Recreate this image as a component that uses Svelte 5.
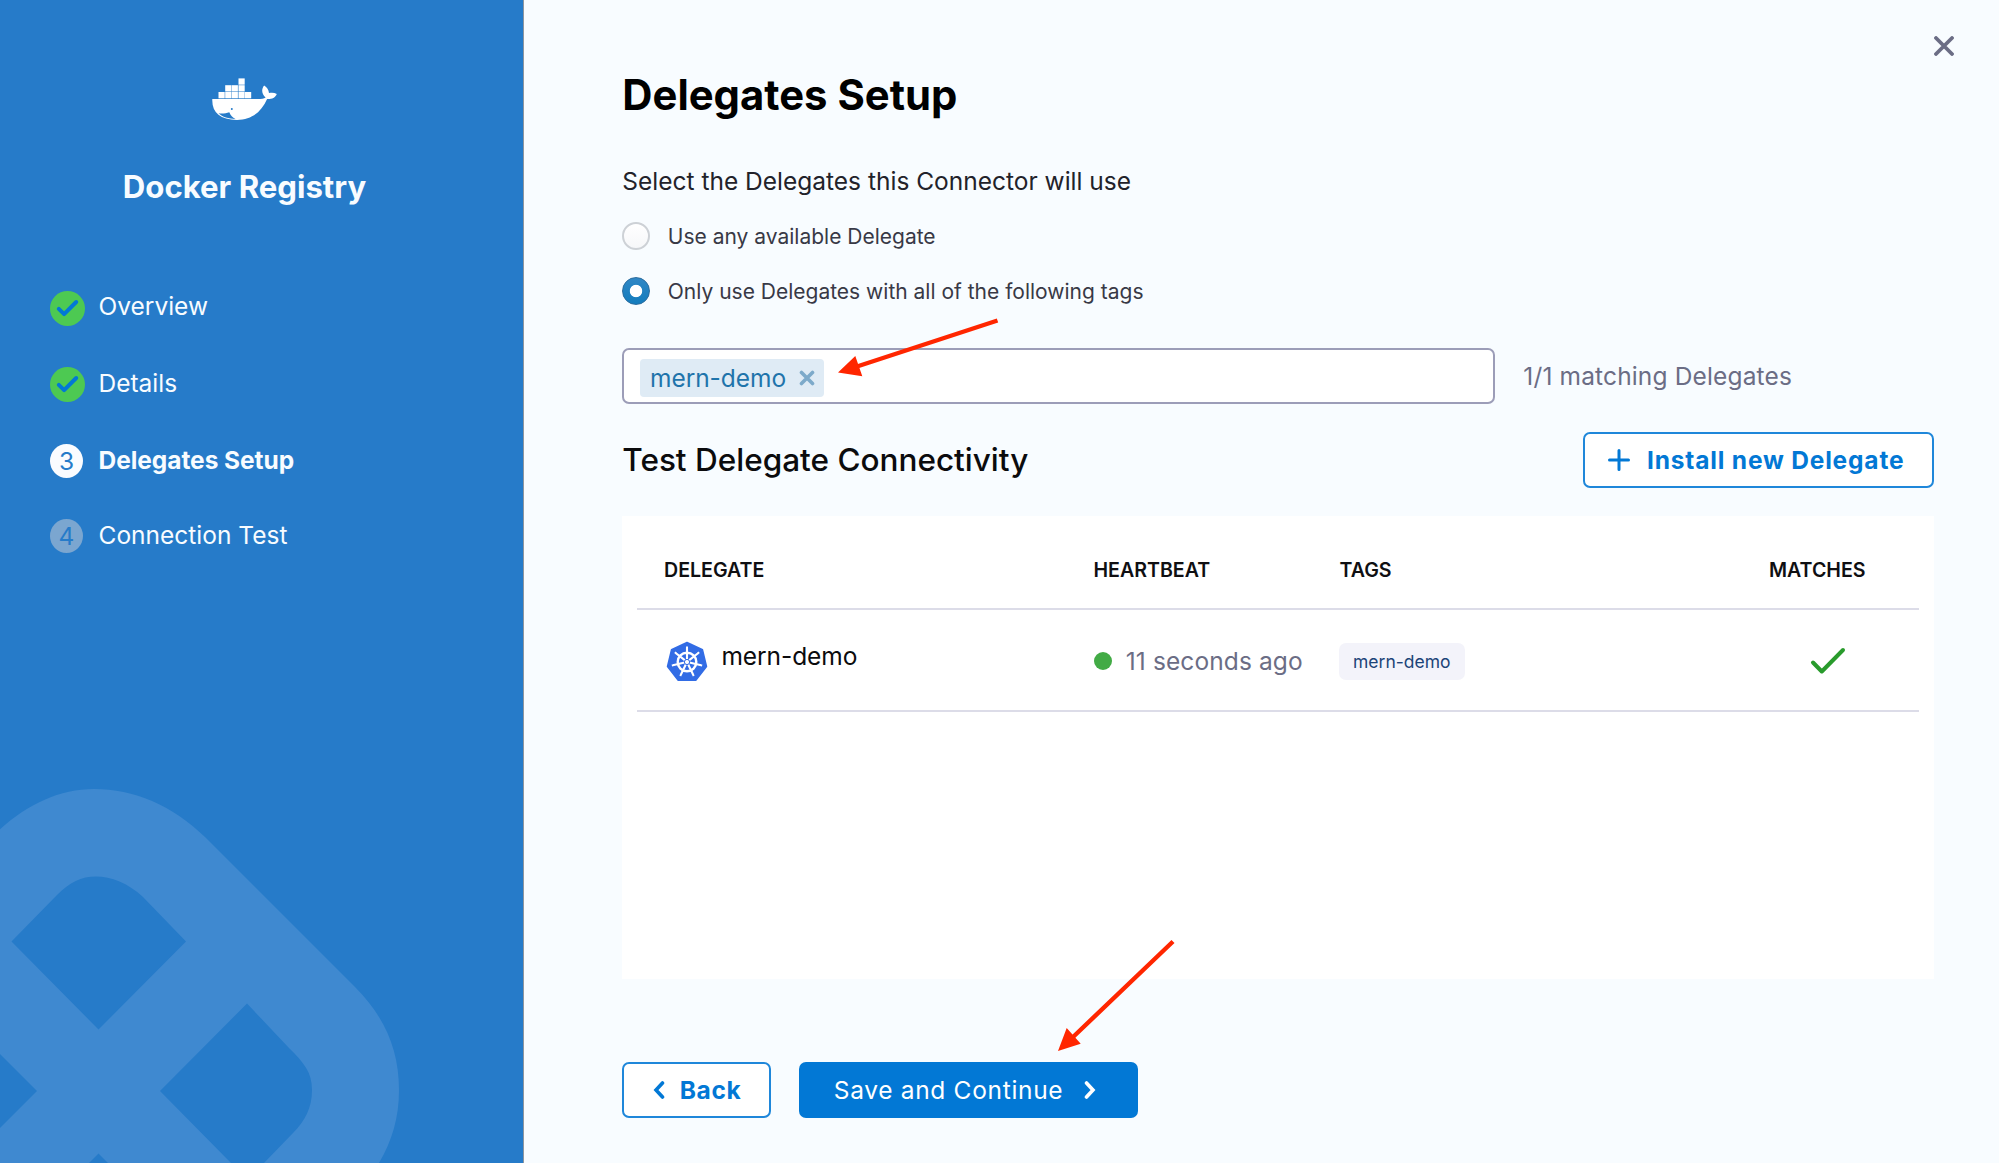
<script>
  const steps = [
    { n: 1, label: 'Overview', state: 'done' },
    { n: 2, label: 'Details', state: 'done' },
    { n: 3, label: 'Delegates Setup', state: 'current' },
    { n: 4, label: 'Connection Test', state: 'pending' }
  ];
  const columns = ['Delegate', 'Heartbeat', 'Tags', 'Matches'];
  const delegates = [{ name: 'mern-demo', heartbeat: '11 seconds ago', tags: ['mern-demo'] }];

  // Container boxes stacked on the whale's back: [x, y]
  const boxes = [[6.5, 14], [13.2, 14], [19.7, 14], [26.5, 14], [33, 14], [13.2, 7.2], [19.7, 7.2], [26.5, 7.2], [26.5, 0.4]];
  const spokes = Array.from({ length: 7 }, (_, i) => (i * 360) / 7);
</script>

<div class="wizard">
  <aside class="sidebar">
    <svg class="pattern" viewBox="0 0 400 375" width="400" height="375" aria-hidden="true">
      <path
        fill-rule="evenodd"
        d="M0 41.300C28 16 60 1 94 1C134 1 172 17 205 49L355 199C385 229 399 262 399 302C399 330 392 353 379 375H264L293 345C305 333 312 320 312 302C312 284 304 275 289 260L247 215.500L160 303L231 375H108L98.500 365.500L89 375H0V340L37 303L0 266ZM11.500 153.500L98.500 241.500L186 153.500L143 109C128 95 111 88.500 96 88.500C81 88.500 70 94 57 107Z"
      />
    </svg>

    <svg class="docker" viewBox="0 0 65 43" width="65" height="43" aria-label="Docker">
      {#each boxes as [x, y]}
        <rect {x} {y} width="6.200" height="6.300" />
      {/each}
      <path d="M0.300 21H46c3.800 0 5.800-.6 7.600-1.600-3.800-3.500-4.600-7.800-1.500-12 3 2 4.600 4.200 4.900 7.600 3-.7 5.500-.4 7.800.9-1.500 3.800-5 5.300-9.700 5.100C49.500 33.500 40 42 25 42 8 42-.3 34.500.3 21Z" />
      <path class="cut" d="M6.500 35.300C10 35.800 14 35.500 17.300 34.300 18.600 37.600 20.500 39.700 23.500 41 16.500 40.800 10.500 39 6.500 35.300Z" />
      <circle class="cut" cx="19.800" cy="31" r="1" />
    </svg>
    <h2>Docker Registry</h2>

    <ol class="steps">
      {#each steps as step}
        <li class={step.state}>
          {#if step.state === 'done'}
            <svg class="mark" viewBox="0 0 35 35" width="35" height="35">
              <circle cx="17.500" cy="17.500" r="17.500" />
              <path d="M8.800 17.900l5.300 5.200L26.200 11" />
            </svg>
          {:else}
            <span class="mark number">{step.n}</span>
          {/if}
          <span class="label">{step.label}</span>
        </li>
      {/each}
    </ol>
  </aside>

  <main>
    <button class="close" aria-label="Close">
      <svg viewBox="0 0 20 20" width="20" height="20"><path d="M2 2l16 16M18 2l-16 16" /></svg>
    </button>

    <h1>Delegates Setup</h1>
    <p class="lead">Select the Delegates this Connector will use</p>

    <div class="radios">
      <label><span class="radio"></span><span class="text">Use any available Delegate</span></label>
      <label><span class="radio on"></span><span class="text">Only use Delegates with all of the following tags</span></label>
    </div>

    <div class="tag-row">
      <div class="tag-input">
        <span class="chip">
          <span class="text">mern-demo</span>
          <svg viewBox="0 0 16 16" width="16" height="16"><path d="M2.500 2.500l11 11M13.500 2.500l-11 11" /></svg>
        </span>
      </div>
      <span class="matching">1/1 matching Delegates</span>
    </div>

    <div class="section-head">
      <h3>Test Delegate Connectivity</h3>
      <button class="btn outline install">
        <svg viewBox="0 0 22 22" width="22" height="22"><path d="M11 1.500v19M1.500 11h19" /></svg>
        Install new Delegate
      </button>
    </div>

    <section class="panel">
      <div class="row head">
        {#each columns as column}<span>{column}</span>{/each}
      </div>
      {#each delegates as d}
        <div class="row body">
          <div class="name">
            <svg viewBox="0 0 42 41" width="42" height="41">
              <path class="hept" d="M21 1.500L36.500 8.800L40.500 25.500L29.800 39.200H12.200L1.500 25.500L5.500 8.800Z" />
              <g class="wheel" transform="translate(21 21)">
                <circle r="9.300" />
                {#each spokes as a}
                  <path d="M0 -2.500V-14.500M-1 -14.500h2" transform="rotate({a})" />
                {/each}
                <circle class="hub" r="2.600" />
              </g>
            </svg>
            <span>{d.name}</span>
          </div>
          <div class="beat"><i></i>{d.heartbeat}</div>
          <div>{#each d.tags as tag}<span class="pill">{tag}</span>{/each}</div>
          <div class="match">
            <svg viewBox="0 0 36 28" width="36" height="28"><path d="M3 15.500L11.800 24.500L33 3" /></svg>
          </div>
        </div>
      {/each}
    </section>

    <footer>
      <button class="btn outline back">
        <svg viewBox="0 0 12 20" width="12" height="20"><path d="M9.500 3L3 10l6.500 7" /></svg>
        Back
      </button>
      <button class="btn primary">
        Save and Continue
        <svg viewBox="0 0 12 20" width="12" height="20"><path d="M2.500 3L9 10l-6.500 7" /></svg>
      </button>
    </footer>
  </main>

  <svg class="arrows" viewBox="0 0 1999 1163" width="1999" height="1163" aria-hidden="true">
    <path class="shaft" d="M997.500 320.500L857 366.500M1173 941.500L1072 1038" />
    <path class="tip" d="M838 372.500L855.300 356L862.300 376.200ZM1058 1051L1066.700 1028L1080.700 1043.700Z" />
  </svg>
</div>

<style>
  :global(body) {
    margin: 0;
  }
  .wizard {
    position: relative;
    display: flex;
    width: 1999px;
    height: 1163px;
    overflow: hidden;
    box-sizing: border-box;
    font: 400 24.5px/30px Inter, sans-serif;
    color: #22222a;
    background: #f8fcff;
  }
  h1, h2, h3, p, ol {
    margin: 0;
    padding: 0;
  }
  svg {
    display: block;
    flex: none;
  }
  button {
    font: inherit;
    padding: 0;
    cursor: pointer;
  }

  .sidebar {
    position: relative;
    box-sizing: border-box;
    flex: none;
    width: 524px;
    padding-top: 78px;
    background: #267bc9;
    border-right: 1px solid #8e969f;
    color: #f8fcff;
  }
  .pattern {
    position: absolute;
    left: 0;
    bottom: 0;
    fill: #3f89d0;
  }
  .docker {
    margin-left: 212px;
    fill: #fff;
  }
  .docker .cut {
    fill: #267bc9;
  }
  h2 {
    position: relative;
    width: 489px;
    margin-top: 46px;
    text-align: center;
    font-size: 31.15px;
    line-height: 40px;
    font-weight: 700;
  }
  .steps {
    position: relative;
    list-style: none;
    margin: 83px 0 0 50px;
  }
  .steps li {
    display: flex;
    align-items: center;
    height: 36px;
    margin-bottom: 40.5px;
  }
  .steps .current {
    margin-bottom: 39px;
  }
  .mark {
    width: 35px;
    margin-right: 13.5px;
  }
  .mark circle {
    fill: #4dc952;
  }
  .mark path {
    fill: none;
    stroke: #0278d5;
    stroke-width: 4;
    stroke-linecap: round;
    stroke-linejoin: round;
  }
  .number {
    width: 33px;
    height: 34px;
    margin-right: 15.5px;
    border-radius: 50%;
    background: #fafcff;
    color: #267bc9;
    line-height: 35px;
    text-align: center;
  }
  .pending .number {
    background: #7ba6d0;
  }
  .label {
    padding-bottom: 4px;
  }
  .current .label {
    padding-bottom: 2px;
    font-weight: 700;
    letter-spacing: -0.05px;
  }
  .pending .label {
    padding-bottom: 3px;
  }

  main {
    position: relative;
    box-sizing: border-box;
    flex: 1;
    display: flex;
    flex-direction: column;
    padding: 69px 65.5px 0 98.3px;
  }
  .close {
    position: absolute;
    top: 36px;
    right: 45px;
    border: 0;
    background: none;
  }
  .close path {
    fill: none;
    stroke: #6b6d85;
    stroke-width: 3.8;
    stroke-linecap: round;
  }
  h1 {
    font-size: 41.8px;
    line-height: 52px;
    font-weight: 700;
    color: #000;
  }
  .lead {
    margin-top: 45px;
  }
  .radios {
    margin-top: 25px;
    font-size: 21px;
    color: #383946;
  }
  .radios label {
    display: flex;
    align-items: center;
    height: 30px;
    margin-bottom: 24.5px;
  }
  .text {
    padding-top: 2px;
  }
  .radio {
    box-sizing: border-box;
    width: 28px;
    height: 28px;
    margin-right: 17.5px;
    border: 2px solid #cdd1d6;
    border-radius: 50%;
    background: linear-gradient(#fff, #f6f7f9);
  }
  .radio.on {
    border: 1.5px solid #2b6c9e;
    background: radial-gradient(circle, #fff 5.8px, transparent 6.6px), linear-gradient(#3087c5, #137cbd);
  }

  .tag-row {
    display: flex;
    align-items: center;
    margin-top: 18px;
  }
  .tag-input {
    box-sizing: border-box;
    display: flex;
    align-items: center;
    width: 873px;
    height: 56px;
    padding: 3px 0 0 15.7px;
    border: 2px solid #9c9db8;
    border-radius: 7px;
    background: #fff;
  }
  .chip {
    display: flex;
    align-items: center;
    gap: 12.5px;
    height: 38px;
    padding: 0 9.5px 0 10px;
    border-radius: 4px;
    background: #dfebf5;
    color: #1f74ab;
  }
  .chip .text {
    padding-top: 1px;
    letter-spacing: -0.05px;
  }
  .chip path {
    fill: none;
    stroke: #7daaca;
    stroke-width: 3.6;
    stroke-linecap: round;
  }
  .matching {
    margin-left: 28px;
    color: #6b6d85;
    letter-spacing: 0.15px;
  }

  .section-head {
    display: flex;
    justify-content: space-between;
    align-items: center;
    margin-top: 28px;
  }
  h3 {
    font-size: 31.5px;
    line-height: 40px;
    font-weight: 500;
    color: #0b0b0d;
  }
  .btn {
    box-sizing: border-box;
    display: flex;
    align-items: center;
    height: 56px;
    border-radius: 7px;
    letter-spacing: 0.6px;
  }
  .btn path {
    fill: none;
    stroke: currentColor;
    stroke-width: 3.6;
    stroke-linecap: round;
  }
  .outline {
    border: 2px solid #1f87da;
    background: #fff;
    color: #0278d5;
    font-weight: 700;
  }
  .install {
    width: 351px;
    padding-left: 23.5px;
    gap: 17px;
    letter-spacing: 0.82px;
  }
  .install path {
    stroke-width: 3;
  }

  .panel {
    box-sizing: border-box;
    height: 463px;
    margin-top: 28px;
    padding: 0 14.5px;
    background: #fff;
  }
  .row {
    display: grid;
    grid-template-columns: 429.5px 246px 429.5px 1fr;
    align-items: center;
    box-sizing: border-box;
    padding-left: 27.2px;
    border-bottom: 2px solid #dcdce8;
  }
  .head {
    height: 94px;
    padding-top: 16px;
    font-size: 19.6px;
    font-weight: 600;
    text-transform: uppercase;
    color: #0f0f12;
  }
  .body {
    height: 102px;
    padding-top: 2px;
  }
  .name {
    display: flex;
    align-items: center;
    gap: 13.5px;
    margin-left: 2px;
    color: #0b0b0d;
  }
  .name span {
    padding-bottom: 10px;
    letter-spacing: -0.08px;
  }
  .hept {
    fill: #326ce5;
    stroke: #326ce5;
    stroke-width: 1.5;
    stroke-linejoin: round;
  }
  .wheel {
    fill: none;
    stroke: #fff;
    stroke-width: 2.4;
  }
  .wheel path {
    stroke-width: 2.1;
  }
  .wheel .hub {
    fill: #fff;
    stroke: #326ce5;
    stroke-width: 1;
  }
  .beat {
    display: flex;
    align-items: center;
    gap: 13.5px;
    margin-left: 0.8px;
    color: #6b6d85;
    letter-spacing: 0.1px;
  }
  .beat i {
    width: 18px;
    height: 18px;
    border-radius: 50%;
    background: #42ab45;
  }
  .pill {
    display: inline-block;
    box-sizing: border-box;
    height: 37px;
    margin-left: -0.5px;
    padding: 0 14px;
    border-radius: 7px;
    background: #f3f3fa;
    color: #1c4478;
    font-size: 17.5px;
    line-height: 37px;
  }
  .match {
    margin-left: 41.5px;
  }
  .match path {
    fill: none;
    stroke: #299b2c;
    stroke-width: 4;
    stroke-linecap: round;
    stroke-linejoin: round;
  }

  footer {
    display: flex;
    gap: 28px;
    margin-top: 83px;
  }
  .back {
    width: 149px;
    padding-left: 28.5px;
    gap: 15px;
  }
  .primary {
    width: 339px;
    padding-left: 34.5px;
    gap: 20.5px;
    border: 0;
    background: #0278d5;
    color: #fff;
    letter-spacing: 0.68px;
  }

  .arrows {
    position: absolute;
    inset: 0;
    pointer-events: none;
  }
  .shaft {
    fill: none;
    stroke: #ff2600;
    stroke-width: 4.4;
  }
  .tip {
    fill: #ff2600;
  }
</style>
